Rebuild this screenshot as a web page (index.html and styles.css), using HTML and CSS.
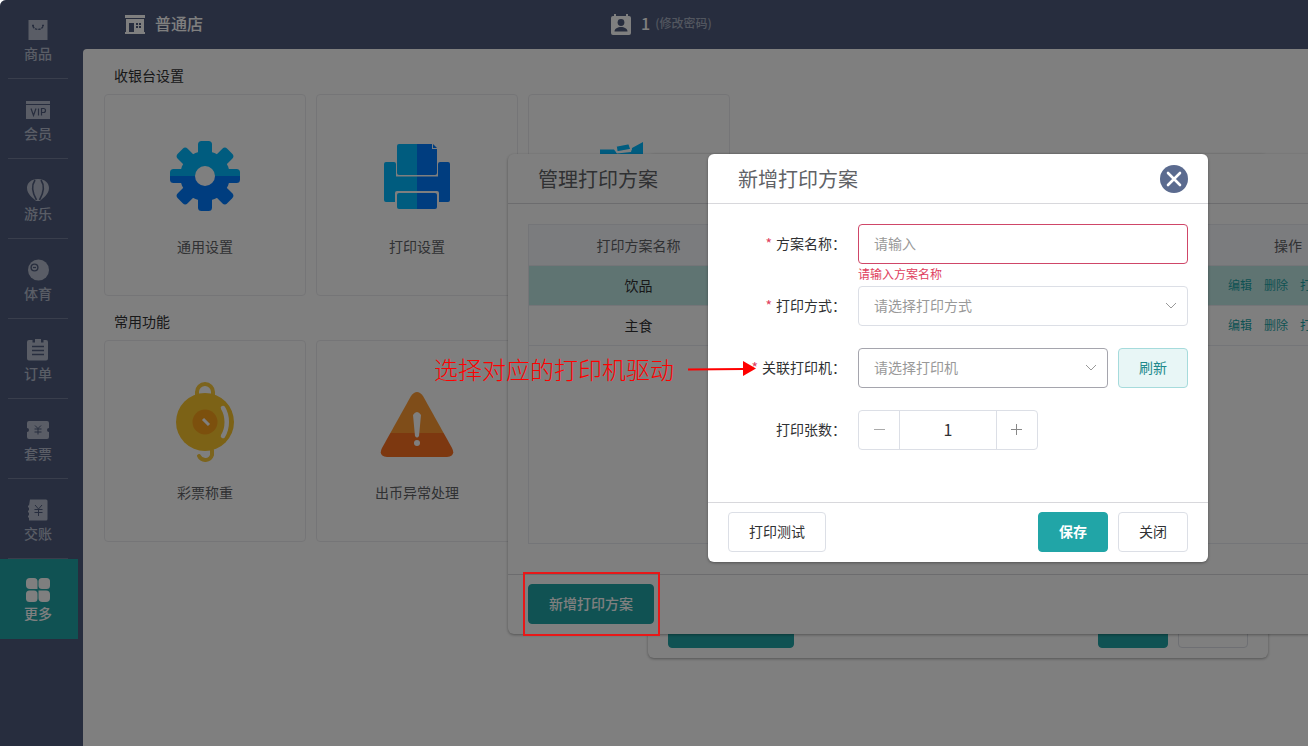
FILE: index.html
```html
<!DOCTYPE html>
<html lang="zh-CN">
<head>
<meta charset="utf-8">
<meta name="viewport" content="width=device-width, initial-scale=1">
<title>收银台设置</title>
<link rel="stylesheet" href="styles.css">
</head>
<body>
<div class="app">
  <nav class="sidebar">
    <a class="nav-item" href="#goods">
      <svg class="nav-icon" viewBox="0 0 24 24"><path fill="currentColor" d="M2.500 2h19v20h-19z"/><path d="M7 8c1 4.500 9 4.500 10 0M6 7.500h2M16 7.500h2" fill="none" stroke="#4f5b7c" stroke-width="1.400" stroke-dasharray="2.500 .8"/></svg>
      <span>商品</span>
    </a>
    <a class="nav-item" href="#member">
      <svg class="nav-icon" viewBox="0 0 24 24"><path fill="currentColor" d="M0 3h24v3H0zM0 7h24v14H0z"/><g fill="none" stroke="#4f5b7c" stroke-width="1.2"><path d="M5 10.500l2.500 7 2.500-7M12.500 10.500v7M15.500 17.500v-7h2a2 2 0 0 1 0 4h-2"/></g></svg>
      <span>会员</span>
    </a>
    <a class="nav-item" href="#play">
      <svg class="nav-icon" viewBox="0 0 24 24"><path fill="currentColor" d="M12 1C5 1 1 5 1 10c0 6 6 10 9 13h4c3-3 9-7 9-13 0-5-4-9-11-9z"/><path d="M9 2C5 8 7 16 10.500 22M15 2c4 6 2 14-1.500 20" fill="none" stroke="#4f5b7c" stroke-width="1.600"/></svg>
      <span>游乐</span>
    </a>
    <a class="nav-item" href="#sport">
      <svg class="nav-icon" viewBox="0 0 24 24"><circle cx="12.500" cy="12" r="10.500" fill="currentColor"/><circle cx="8.500" cy="9.500" r="3.400" fill="none" stroke="#4f5b7c" stroke-width="1.400"/><path d="M7 9.500h3" stroke="#4f5b7c" stroke-width="1.200"/></svg>
      <span>体育</span>
    </a>
    <a class="nav-item" href="#order">
      <svg class="nav-icon" viewBox="0 0 24 24"><path fill="currentColor" d="M3 2h3.500v2.500h2.500V1h6v3.500h2.500V2H20a2 2 0 0 1 2 2v16.500a2 2 0 0 1-2 2H3a2 2 0 0 1-2-2V4a2 2 0 0 1 2-2z"/><path d="M6 8.500h12M6 12.500h12M6 16.500h12" stroke="#4f5b7c" stroke-width="1.300"/></svg>
      <span>订单</span>
    </a>
    <a class="nav-item" href="#package">
      <svg class="nav-icon" viewBox="0 0 24 24"><path fill="currentColor" d="M3 3h18a2 2 0 0 1 2 2v5a2 2 0 0 0 0 4v5a2 2 0 0 1-2 2H3a2 2 0 0 1-2-2v-5a2 2 0 0 0 0-4V5a2 2 0 0 1 2-2z"/><path d="M9 7.500l3 3 3-3M12 10.500v6M8.500 11h7M8.500 14h7" fill="none" stroke="#4f5b7c" stroke-width="1"/></svg>
      <span>套票</span>
    </a>
    <a class="nav-item" href="#shift">
      <svg class="nav-icon" viewBox="0 0 24 24"><path fill="currentColor" d="M4 1.500h16a1.500 1.500 0 0 1 1.500 1.500v18a1.500 1.500 0 0 1-1.500 1.500H3v-3h-1v-2h1v-3H2v-2h1v-3H2v-2h1z"/><path d="M9 7l3.500 4L16 7M12.500 11v7M8.500 11.500h8M8.500 14.500h8" fill="none" stroke="#4f5b7c" stroke-width="1"/></svg>
      <span>交账</span>
    </a>
    <a class="nav-item active" href="#more">
      <svg class="nav-icon" viewBox="0 0 24 24" fill="currentColor"><path d="M4 0h4a3.500 3.500 0 0 1 3.500 3.500V11H4a4 4 0 0 1-4-4V4a4 4 0 0 1 4-4z"/><rect x="12.500" width="11.500" height="11" rx="3.500"/><rect y="12.500" width="11.500" height="11.500" rx="3.500"/><path d="M12.500 12.500H20a4 4 0 0 1 4 4V20a4 4 0 0 1-4 4h-3.500a4 4 0 0 1-4-4z"/></svg>
      <span>更多</span>
    </a>
  </nav>

  <div class="content">
    <header class="topbar">
      <div class="shop">
        <svg class="shop-icon" viewBox="0 0 22 22"><path fill="currentColor" d="M1 1h20v3h-1v14h1v2H1v-2h1V4H1z"/><path d="M2 4.500h18" stroke="#4f5b7c" stroke-width="1"/><path fill="#4f5b7c" d="M5 9h5v9H5zM12 9h2v2h-2zM15 9h2v2h-2zM12 12h2v2h-2zM15 12h2v2h-2z"/></svg>
        <span>普通店</span>
      </div>
      <div class="user">
        <svg class="user-icon" viewBox="0 0 22 22"><path fill="currentColor" d="M3 2h1V0h2v2h10V0h2v2h1a2 2 0 0 1 2 2v15a2 2 0 0 1-2 2H3a2 2 0 0 1-2-2V4a2 2 0 0 1 2-2z"/><circle cx="11" cy="8.500" r="3.400" fill="#4f5b7c"/><path d="M4.500 17.500c0-6 13-6 13 0z" fill="#4f5b7c"/></svg>
        <span>1</span>
        <a class="password-link" href="#password">(修改密码)</a>
      </div>
    </header>

    <main class="main">
      <section class="group">
        <h2 class="group-title">收银台设置</h2>
        <div class="cards">
          <a class="card" href="#general">
            <svg class="card-icon" viewBox="0 0 72 72">
              <mask id="gear"><g fill="#fff"><circle cx="36" cy="36" r="25"/><g id="teeth"><rect x="29" y="1" width="14" height="70" rx="3.500"/><rect x="1" y="29" width="70" height="14" rx="3.500"/></g><use href="#teeth" transform="rotate(45 36 36)"/></g><circle cx="36" cy="36" r="10" fill="#000"/></mask>
              <g mask="url(#gear)"><path class="sky" d="M0 0h72v36H0z"/><path class="blue" d="M0 36h72v36H0z"/></g>
            </svg>
            <span>通用设置</span>
          </a>
          <a class="card" href="#print">
            <svg class="card-icon" viewBox="0 0 72 72">
              <path class="sky" d="M18 4h18v31H18a2 2 0 0 1-2-2V6a2 2 0 0 1 2-2z"/><path class="blue" d="M36 4h15v5h5v24a2 2 0 0 1-2 2H36z"/><path class="blue" d="M52 4l4 4h-4z"/>
              <path class="sky" d="M5 22h8a2 2 0 0 1 2 2v12.500h21V51H16a2 2 0 0 0-2 2v9H5a2 2 0 0 1-2-2V24a2 2 0 0 1 2-2z"/><path class="blue" d="M67 22h-8a2 2 0 0 0-2 2v12.500H36V51h20a2 2 0 0 1 2 2v9h9a2 2 0 0 0 2-2V24a2 2 0 0 0-2-2z"/>
              <path class="sky" d="M18 53h18v16H18a2 2 0 0 1-2-2V55a2 2 0 0 1 2-2z"/><path class="blue" d="M36 53h18a2 2 0 0 1 2 2v12a2 2 0 0 1-2 2H36z"/>
            </svg>
            <span>打印设置</span>
          </a>
          <a class="card" href="#ticket" aria-label="小票">
            <svg class="card-icon" viewBox="0 0 72 72"><path class="sky" d="M7 9.500h14l3 4 14-1.500 1-4 11-6v44H7z"/><path class="sky" d="M23 6l13-2.500 2 6L24 12z" stroke="#fff" stroke-width="1.500" stroke-linejoin="round"/><path class="blue" d="M7 36h43v30H7z"/></svg>
          </a>
        </div>
      </section>
      <section class="group">
        <h2 class="group-title">常用功能</h2>
        <div class="cards">
          <a class="card" href="#weigh">
            <svg class="card-icon" viewBox="0 0 72 82">
              <g fill="none" stroke="#f8c83a" stroke-width="4"><path d="M28 14v-3a8 8 0 0 1 16 0v3M43 69v5a7 7 0 0 1-13 1" stroke-linecap="round"/></g>
              <circle cx="36" cy="41" r="29" fill="#f8c42c"/><circle cx="36" cy="41" r="12.500" fill="#f9a01b"/>
              <path d="M54 27c5 8 5 20 0 28" fill="none" stroke="#fff" stroke-width="4.500" stroke-linecap="round"/><path d="M34 38l6 6" stroke="#fff" stroke-width="3"/>
            </svg>
            <span>彩票称重</span>
          </a>
          <a class="card" href="#coin">
            <svg class="card-icon wide" viewBox="0 0 74 72">
              <clipPath id="warn"><path d="M31 10q6-8 12 0l29 52q4 8-5 9H7q-9-1-5-9z"/></clipPath>
              <g clip-path="url(#warn)"><path fill="#ff9a33" d="M0 0h74v47H0z"/><path fill="#fa7020" d="M0 47h74v27H0z"/></g>
              <path d="M33 29q4-6 8 0l-2 21q-2 3-4 0z" fill="#fff"/><circle cx="37" cy="57" r="3" fill="#fff"/>
            </svg>
            <span>出币异常处理</span>
          </a>
        </div>
      </section>
    </main>
  </div>

  <section class="dialog dialog-print">
    <footer class="dialog-footer">
      <button class="btn primary wide" type="button" aria-label="管理打印方案"></button>
      <span class="spacer"></span>
      <button class="btn primary narrow" type="button" aria-label="保存"></button>
      <button class="btn narrow" type="button" aria-label="关闭"></button>
    </footer>
  </section>

  <section class="dialog dialog-manage">
    <header class="dialog-header"><h2>管理打印方案</h2></header>
    <div class="dialog-body">
      <div class="table-box">
        <table class="plans">
          <colgroup><col class="col-name"><col><col class="col-action"></colgroup>
          <thead><tr><th>打印方案名称</th><th></th><th>操作</th></tr></thead>
          <tbody>
            <tr class="selected"><td>饮品</td><td></td><td><div class="links"><a href="#edit">编辑</a><a href="#delete">删除</a><a href="#test">打印测试</a></div></td></tr>
            <tr><td>主食</td><td></td><td><div class="links"><a href="#edit">编辑</a><a href="#delete">删除</a><a href="#test">打印测试</a></div></td></tr>
          </tbody>
        </table>
      </div>
    </div>
    <footer class="dialog-footer"><button class="btn primary" type="button">新增打印方案</button></footer>
  </section>

  <div class="mask"></div>

  <form class="dialog dialog-form">
    <header class="dialog-header">
      <h2>新增打印方案</h2>
      <button class="close" type="button" aria-label="关闭窗口"><svg viewBox="0 0 28 28"><circle cx="14" cy="14" r="14" fill="#5b6b8f"/><path d="M8 8l12 12M20 8L8 20" stroke="#fff" stroke-width="2.600" stroke-linecap="round"/></svg></button>
    </header>
    <div class="dialog-body form-body">
      <div class="row">
        <label class="label required" for="plan-name">方案名称：</label>
        <div class="control"><input class="field invalid" id="plan-name" type="text" placeholder="请输入"><p class="error">请输入方案名称</p></div>
      </div>
      <div class="row">
        <label class="label required" for="print-mode">打印方式：</label>
        <div class="control select-wrap"><select class="field" id="print-mode"><option>请选择打印方式</option></select><svg class="chevron" viewBox="0 0 12 8"><path d="M1 1l5 5 5-5" fill="none" stroke="currentColor"/></svg></div>
      </div>
      <div class="row">
        <label class="label required" for="printer">关联打印机：</label>
        <div class="control pair">
          <div class="select-wrap"><select class="field hovered" id="printer"><option>请选择打印机</option></select><svg class="chevron" viewBox="0 0 12 8"><path d="M1 1l5 5 5-5" fill="none" stroke="currentColor"/></svg></div>
          <button class="btn soft" type="button">刷新</button>
        </div>
      </div>
      <div class="row">
        <label class="label" for="copies">打印张数：</label>
        <div class="stepper">
          <button type="button" aria-label="减少" disabled><svg viewBox="0 0 12 12"><path d="M1 5.500h11" stroke="currentColor"/></svg></button>
          <input id="copies" type="text" value="1">
          <button type="button" aria-label="增加"><svg viewBox="0 0 12 12"><path d="M0 5.500h11M5.500 0v11" stroke="currentColor"/></svg></button>
        </div>
      </div>
    </div>
    <footer class="dialog-footer">
      <button class="btn" type="button">打印测试</button>
      <span class="spacer"></span>
      <button class="btn primary strong" type="submit">保存</button>
      <button class="btn" type="button">关闭</button>
    </footer>
  </form>

  <div class="note">
    <span>选择对应的打印机驱动</span>
    <svg class="arrow" viewBox="0 0 68 16"><path d="M0 8.500L56 8" stroke="#f00" stroke-width="2"/><path d="M55 0l13 7.500L55 15z" fill="#f00"/></svg>
  </div>
  <div class="highlight"></div>
</div>
</body>
</html>
```

FILE: styles.css
```css
* { box-sizing: border-box; }

body {
  margin: 0;
  background: #fff;
  color: #303133;
  font: 14px/20px "Noto Sans CJK SC", "Noto Sans", sans-serif;
  overflow: hidden;
}

h2, p { margin: 0; font-weight: 400; }
a { color: inherit; text-decoration: none; }
button, input, select { font: inherit; color: inherit; margin: 0; }
svg { display: block; }

.app {
  position: relative;
  display: flex;
  min-height: 100vh;
  background: #4f5b7c;
  border-radius: 6px 0 0 0;
  overflow: hidden;
}

/* sidebar */
.sidebar { flex: none; width: 83px; margin-top: -1px; }
.nav-item {
  position: relative;
  display: flex;
  flex-direction: column;
  align-items: center;
  width: 78px;
  height: 80px;
  padding: 19px 2px 0 0;
  gap: 1px;
  color: #b4bbcc;
  font-weight: 500;
}
.nav-item::after {
  content: "";
  position: absolute;
  left: 8px;
  bottom: 0;
  width: 60px;
  height: 1px;
  background: #727d99;
}
.nav-icon { width: 24px; height: 24px; }
.nav-item.active { color: #fff; background: #21a5a7; }
.nav-item.active::after { display: none; }

/* top bar */
.content { flex: 1; display: flex; flex-direction: column; min-width: 0; }
.topbar {
  display: flex;
  align-items: center;
  height: 49px;
  padding-left: 41px;
  color: #fff;
  font-size: 16px;
  font-weight: 500;
}
.shop, .user { display: flex; align-items: center; gap: 9px; }
.shop span, .user span, .password-link { padding-bottom: 3px; }
.shop { width: 486px; }
.shop-icon, .user-icon { width: 22px; height: 22px; }
.password-link { margin-left: -4px; color: #a5adbf; font-size: 12px; }

/* main */
.main {
  flex: 1;
  padding: 9px 21px;
  background: #fff;
  border-radius: 4px 0 0 0;
}
.group { margin-bottom: 8px; }
.group-title { padding: 7px 10px 9px; font-size: 14px; line-height: 20px; }
.cards { display: flex; flex-wrap: wrap; gap: 10px; }
.card {
  display: flex;
  flex-direction: column;
  align-items: center;
  width: 202px;
  height: 202px;
  padding-top: 40px;
  gap: 19px;
  border: 1px solid #ebebee;
  border-radius: 4px;
  color: #606266;
}
.card-icon { width: 72px; height: 82px; }
.card-icon.wide { width: 74px; }
.sky { fill: #00b8ff; }
.blue { fill: #007aff; }

/* dialogs */
.dialog {
  position: absolute;
  top: 154px;
  display: flex;
  flex-direction: column;
  background: #fff;
  border-radius: 6px;
  box-shadow: 0 1px 3px rgba(0, 0, 0, .35);
}
.dialog-print { left: 648px; width: 620px; height: 504px; justify-content: flex-end; }
.dialog-print .dialog-footer { border-top-color: transparent; }
.dialog-manage { left: 508px; width: 900px; }
.dialog-form { left: 708px; width: 500px; }
.dialog-header {
  display: flex;
  align-items: center;
  justify-content: space-between;
  height: 50px;
  padding: 0 20px 0 30px;
  border-bottom: 1px solid #d8d8dc;
}
.dialog-header h2 { color: #606266; font-size: 20px; line-height: 30px; }
.dialog-body { padding: 20px 20px 30px; }
.dialog-footer {
  display: flex;
  align-items: center;
  gap: 10px;
  height: 60px;
  padding: 0 20px 1px;
  border-top: 1px solid #d8d8dc;
}
.spacer { flex: 1; }
.close { width: 28px; height: 28px; padding: 0; border: 0; border-radius: 50%; background: none; }

.btn {
  height: 40px;
  padding: 0 20px 2px;
  background: #fff;
  border: 1px solid #dcdfe6;
  border-radius: 4px;
}
.btn.primary { background: #21a5a7; border-color: #21a5a7; color: #fff; font-weight: 500; }
.btn.primary.strong { font-weight: 700; }
.btn.soft { background: #e8f6f6; border-color: #a6dbdc; color: #21898b; }
.btn.wide { width: 126px; }
.btn.narrow { width: 70px; }

/* table */
.table-box { height: 320px; border: 1px solid #e8eaf0; }
.plans { width: 100%; table-layout: fixed; border-collapse: separate; border-spacing: 0; text-align: center; }
.col-name { width: 219px; }
.col-action { width: 198px; }
.plans th, .plans td { height: 40px; padding: 0 0 2px; border-bottom: 1px solid #e8eaf0; }
.plans th { height: 41px; padding: 0; background: #f7f8fc; color: #606266; font-weight: 400; }
.selected { background: #bfe8e4; }
.links { display: flex; justify-content: center; gap: 12px; color: #21a5a7; font-size: 12px; }

.mask { position: absolute; inset: 0; background: rgba(0, 0, 0, .5); }

/* form */
.form-body { display: flex; flex-direction: column; gap: 22px; padding-bottom: 52px; }
.row { display: flex; height: 40px; }
.label { width: 130px; padding-right: 12px; line-height: 38px; text-align: right; color: #303133; }
.required::before { content: "*"; margin-right: 4px; color: #e0405e; }
.control { position: relative; flex: 1; }
.pair { display: flex; gap: 10px; }
.field {
  display: block;
  width: 100%;
  height: 40px;
  padding: 0 15px 2px;
  background: #fff;
  border: 1px solid #dcdfe6;
  border-radius: 4px;
  color: #999;
  appearance: none;
}
.field::placeholder { color: #999; }
.field.invalid { border-color: #cf4668; }
.field.hovered { border-color: #a5a5ad; }
.error { position: absolute; top: 40px; left: 0; color: #e0405e; font-size: 12px; }
.select-wrap { position: relative; flex: 1; }
.chevron { position: absolute; top: 16px; right: 11px; width: 12px; height: 8px; color: #999; }
.stepper { display: flex; width: 180px; height: 40px; border: 1px solid #dcdfe6; border-radius: 4px; }
.stepper button { display: grid; place-items: center; width: 40px; padding: 0; border: 0; background: none; color: #888; }
.stepper button:disabled { color: #aaa; }
.stepper svg { width: 12px; height: 12px; }
.stepper input {
  flex: 1;
  min-width: 0;
  padding: 0 0 2px;
  border: solid #dcdfe6;
  border-width: 0 1px;
  font-size: 16px;
  text-align: center;
}

/* annotations */
.note {
  position: absolute;
  top: 353px;
  left: 434px;
  display: flex;
  align-items: center;
  gap: 14px;
  color: #f00;
  font-size: 24px;
  font-weight: 300;
  line-height: 32px;
}
.arrow { width: 68px; height: 16px; }
.highlight { position: absolute; top: 572px; left: 523px; width: 137px; height: 64px; border: 2px solid #e81818; }
```
